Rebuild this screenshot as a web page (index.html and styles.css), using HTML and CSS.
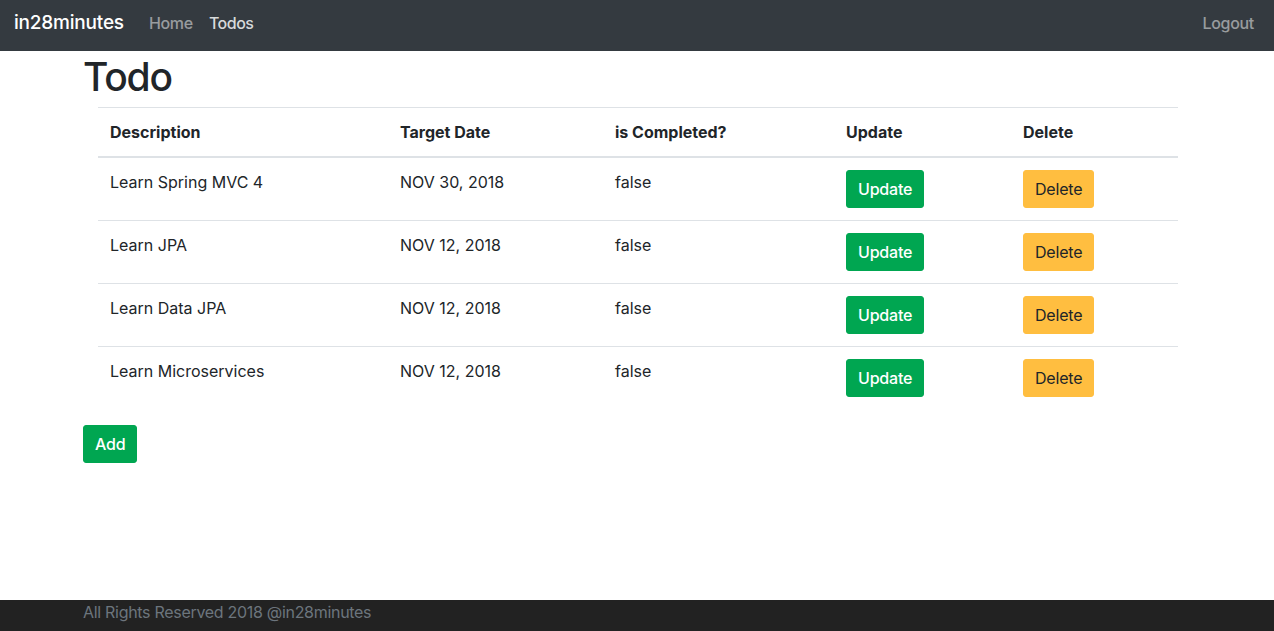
FILE: index.html
```html
<!DOCTYPE html>
<html>
<head>
<meta charset="utf-8">
<title>Todo</title>
<link rel="stylesheet" href="styles.css">
</head>
<body>
<header class="navbar">
  <div class="nav-left">
    <a class="brand" href="#">in28minutes</a>
    <a class="nav-link" href="#">Home</a>
    <a class="nav-link active" href="#">Todos</a>
  </div>
  <a class="nav-link" href="#">Logout</a>
</header>
<main class="container">
  <h1 class="title">Todo</h1>
  <div class="inner">
    <table class="table">
      <thead>
        <tr>
          <th class="c1">Description</th>
          <th class="c2">Target Date</th>
          <th class="c3">is Completed?</th>
          <th class="c4">Update</th>
          <th class="c5">Delete</th>
        </tr>
      </thead>
      <tbody>
        <tr>
          <td>Learn Spring MVC 4</td>
          <td>NOV 30, 2018</td>
          <td>false</td>
          <td><button class="btn btn-success">Update</button></td>
          <td><button class="btn btn-warning">Delete</button></td>
        </tr>
        <tr>
          <td>Learn JPA</td>
          <td>NOV 12, 2018</td>
          <td>false</td>
          <td><button class="btn btn-success">Update</button></td>
          <td><button class="btn btn-warning">Delete</button></td>
        </tr>
        <tr>
          <td>Learn Data JPA</td>
          <td>NOV 12, 2018</td>
          <td>false</td>
          <td><button class="btn btn-success">Update</button></td>
          <td><button class="btn btn-warning">Delete</button></td>
        </tr>
        <tr>
          <td>Learn Microservices</td>
          <td>NOV 12, 2018</td>
          <td>false</td>
          <td><button class="btn btn-success">Update</button></td>
          <td><button class="btn btn-warning">Delete</button></td>
        </tr>
      </tbody>
    </table>
  </div>
  <button class="btn btn-success">Add</button>
</main>
<footer class="footer">
  <div class="footer-inner">All Rights Reserved 2018 @in28minutes</div>
</footer>
</body>
</html>
```

FILE: styles.css
```css
* { box-sizing: border-box; }
html, body { height: 100%; }
body {
  margin: 0;
  font-family: Inter, "Liberation Sans", sans-serif;
  font-size: 16px;
  line-height: 24px;
  color: #212529;
  background: #fff;
  display: flex;
  flex-direction: column;
  min-height: 100vh;
}
a { text-decoration: none; }
.navbar {
  height: 51px;
  background: #343a40;
  display: flex;
  align-items: center;
  justify-content: space-between;
  padding: 0 20px 5px 14px;
}
.nav-left { display: flex; align-items: center; }
.brand {
  color: #fff;
  font-size: 19px;
  font-weight: 500;
  margin-right: 25px;
  letter-spacing: -0.2px;
}
.nav-link {
  color: rgba(255,255,255,0.5);
  font-size: 16px;
  font-weight: 500;
  margin-right: 16px;
  letter-spacing: -0.3px;
}
.nav-link:last-child { margin-right: 0; }
.nav-link.active { color: rgba(255,255,255,0.82); letter-spacing: -0.5px; }
.container {
  width: 1140px;
  margin: 0 auto;
  padding-left: 16px;
  padding-right: 15px;
}
.title {
  margin: 6px 0 10px;
  font-size: 39px;
  font-weight: 500;
  line-height: 40px;
  letter-spacing: -1.2px;
}
.inner { padding: 0 15px; }
.table {
  width: 1080px;
  border-collapse: collapse;
  margin-bottom: 16px;
}
.table th, .table td {
  text-align: left;
  vertical-align: top;
  padding: 12px;
  border-top: 1px solid #dee2e6;
}
.table th {
  font-weight: 700;
  border-bottom: 2px solid #dee2e6;
  font-size: 16px;
}
.c1 { width: 290px; }
.c2 { width: 215px; }
.c3 { width: 231px; }
.c4 { width: 177px; }
.c5 { width: 167px; }
.btn {
  font-family: inherit;
  font-size: 16px;
  line-height: 24px;
  padding: 6px 11px;
  border: 1px solid transparent;
  border-radius: 3px;
  cursor: pointer;
  font-weight: 500;
  letter-spacing: -0.2px;
}
.btn-success { background: #00a651; color: #fff; border-color: #00a651; }
.btn-warning { background: #ffbe40; color: #212529; border-color: #ffbe40; font-weight: 400; }
.footer {
  margin-top: auto;
  height: 31px;
  background: #222222;
}
.footer-inner {
  width: 1140px;
  margin: 0 auto;
  padding-left: 16px;
  color: #6c757d;
  line-height: 24px;
  letter-spacing: -0.3px;
}
```
